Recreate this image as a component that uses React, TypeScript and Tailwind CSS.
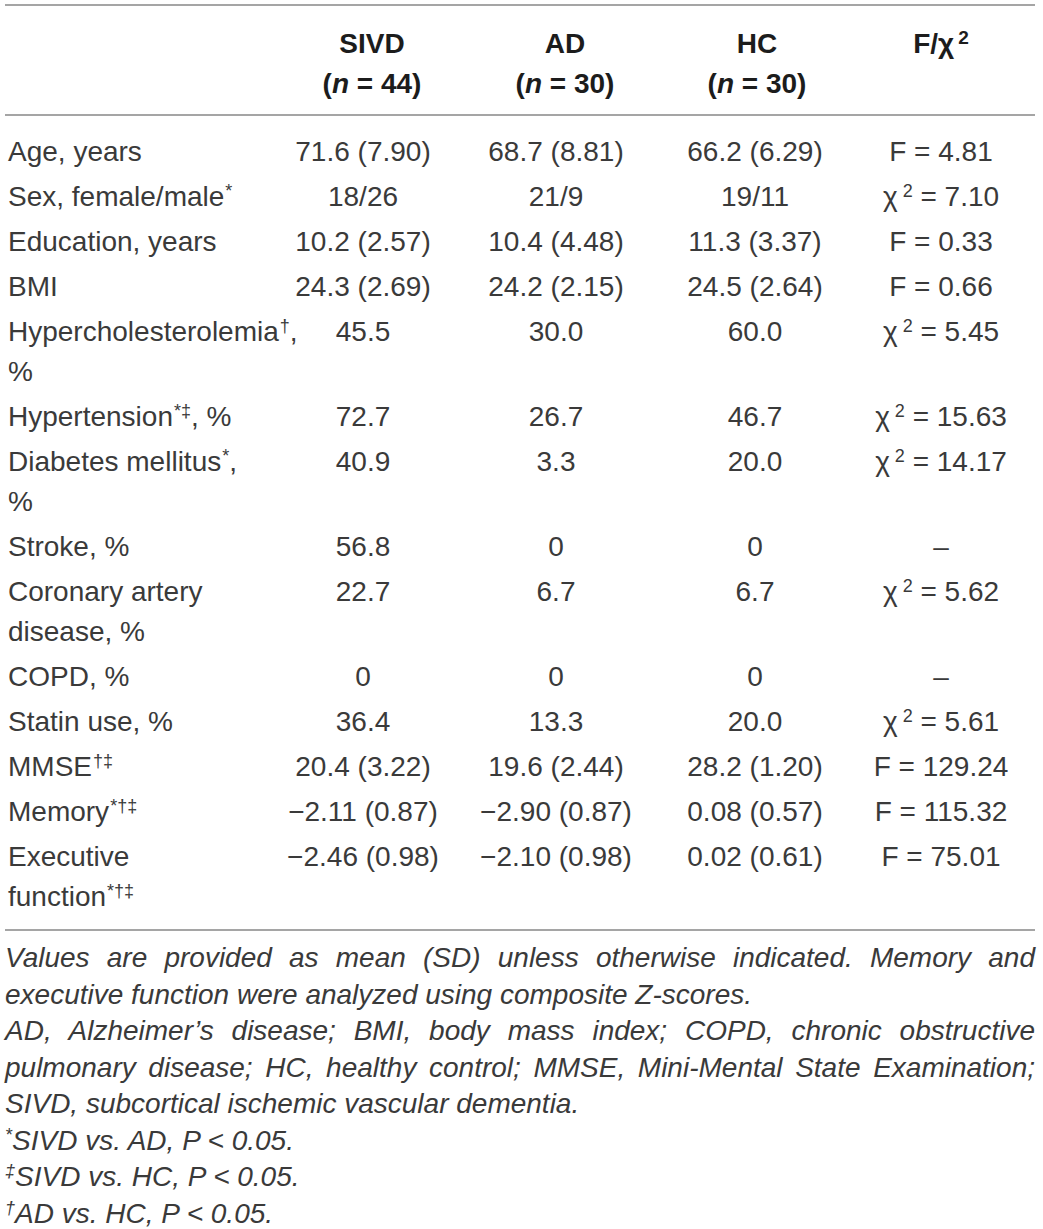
import type { ReactNode } from "react";

type RowData = {
  label: ReactNode;
  cells: ReactNode[];
};

function Sup({ children }: { children: ReactNode }) {
  return <sup className="text-[18px] ml-[1px]">{children}</sup>;
}

function Chi({ value }: { value: string }) {
  return (
    <>
      χ<sup className="text-[18px] ml-[5px]">2</sup> = {value}
    </>
  );
}

const rows: RowData[] = [
  { label: "Age, years", cells: ["71.6 (7.90)", "68.7 (8.81)", "66.2 (6.29)", "F = 4.81"] },
  {
    label: (
      <>
        Sex, female/male<Sup>*</Sup>
      </>
    ),
    cells: ["18/26", "21/9", "19/11", <Chi value="7.10" />],
  },
  { label: "Education, years", cells: ["10.2 (2.57)", "10.4 (4.48)", "11.3 (3.37)", "F = 0.33"] },
  { label: "BMI", cells: ["24.3 (2.69)", "24.2 (2.15)", "24.5 (2.64)", "F = 0.66"] },
  {
    label: (
      <>
        Hypercholesterolemia<Sup>†</Sup>,
        <br />%
      </>
    ),
    cells: ["45.5", "30.0", "60.0", <Chi value="5.45" />],
  },
  {
    label: (
      <>
        Hypertension<Sup>*‡</Sup>, %
      </>
    ),
    cells: ["72.7", "26.7", "46.7", <Chi value="15.63" />],
  },
  {
    label: (
      <>
        Diabetes mellitus<Sup>*</Sup>,
        <br />%
      </>
    ),
    cells: ["40.9", "3.3", "20.0", <Chi value="14.17" />],
  },
  { label: "Stroke, %", cells: ["56.8", "0", "0", "–"] },
  {
    label: (
      <>
        Coronary artery
        <br />
        disease, %
      </>
    ),
    cells: ["22.7", "6.7", "6.7", <Chi value="5.62" />],
  },
  { label: "COPD, %", cells: ["0", "0", "0", "–"] },
  { label: "Statin use, %", cells: ["36.4", "13.3", "20.0", <Chi value="5.61" />] },
  {
    label: (
      <>
        MMSE<Sup>†‡</Sup>
      </>
    ),
    cells: ["20.4 (3.22)", "19.6 (2.44)", "28.2 (1.20)", "F = 129.24"],
  },
  {
    label: (
      <>
        Memory<Sup>*†‡</Sup>
      </>
    ),
    cells: ["−2.11 (0.87)", "−2.90 (0.87)", "0.08 (0.57)", "F = 115.32"],
  },
  {
    label: (
      <>
        Executive
        <br />
        function<Sup>*†‡</Sup>
      </>
    ),
    cells: ["−2.46 (0.98)", "−2.10 (0.98)", "0.02 (0.61)", "F = 75.01"],
  },
];

const grid = "grid grid-cols-[278px_160px_226px_172px_1fr]";

export default function App() {
  return (
    <div className="bg-white w-[1043px] min-h-[1229px] text-[#3a3a3a] font-['Liberation_Sans',Arial,sans-serif] text-[28px]">
      <div className="pt-[4px] pl-[5px] pr-[8px]">
        {/* header */}
        <div className={`${grid} border-y-2 border-[#a5a5a5] pt-[18px] pb-[10px] leading-[40px] font-bold text-[#1c1c1c]`}>
          <div />
          <div className="text-center pl-[18px]">
            SIVD
            <br />(<i>n</i> = 44)
          </div>
          <div className="text-center pl-[18px]">
            AD
            <br />(<i>n</i> = 30)
          </div>
          <div className="text-center pl-[4px]">
            HC
            <br />(<i>n</i> = 30)
          </div>
          <div className="text-center pl-[6px]">
            F/χ<sup className="text-[19px] ml-[4px]">2</sup>
          </div>
        </div>

        {/* body */}
        <div className="pt-[13px] pb-[10px] border-b-2 border-[#a5a5a5] leading-[40px]">
          {rows.map((row, i) => (
            <div key={i} className={`${grid} py-[2.5px]`}>
              <div className="pl-[3px] whitespace-nowrap">{row.label}</div>
              {row.cells.map((c, j) => (
                <div key={j} className={`text-center whitespace-nowrap ${j === 3 ? "pl-[6px]" : ""}`}>
                  {c}
                </div>
              ))}
            </div>
          ))}
        </div>

        {/* footnotes */}
        <div className="pt-[9px] italic leading-[36.5px] text-[28px]">
          <p className="text-justify [text-align-last:justify]">
            Values are provided as mean (SD) unless otherwise indicated. Memory and
          </p>
          <p>executive function were analyzed using composite Z-scores.</p>
          <p className="text-justify [text-align-last:justify]">
            AD, Alzheimer’s disease; BMI, body mass index; COPD, chronic obstructive
          </p>
          <p className="text-justify [text-align-last:justify]">
            pulmonary disease; HC, healthy control; MMSE, Mini-Mental State Examination;
          </p>
          <p>SIVD, subcortical ischemic vascular dementia.</p>
          <p>
            <sup className="text-[18px]">*</sup>SIVD vs. AD, <i>P</i> &lt; 0.05.
          </p>
          <p>
            <sup className="text-[18px]">‡</sup>SIVD vs. HC, <i>P</i> &lt; 0.05.
          </p>
          <p>
            <sup className="text-[18px]">†</sup>AD vs. HC, <i>P</i> &lt; 0.05.
          </p>
        </div>
      </div>
    </div>
  );
}
